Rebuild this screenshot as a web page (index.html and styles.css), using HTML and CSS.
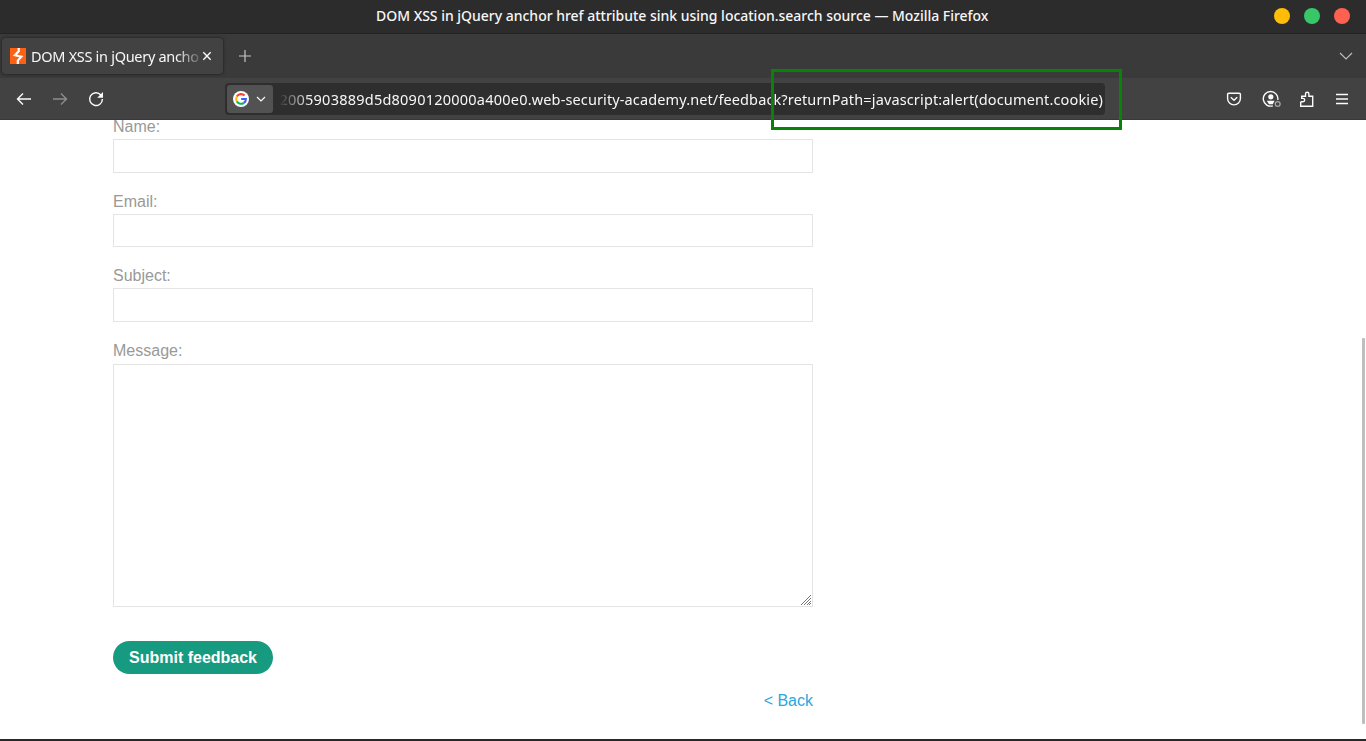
FILE: index.html
```
<!DOCTYPE html>
<html lang="en">
<head>
<meta charset="utf-8">
<title>DOM XSS in jQuery anchor href attribute sink using location.search source</title>
<link rel="stylesheet" href="styles.css">
</head>
<body>
<header class="titlebar">
  <span class="window-title">DOM XSS in jQuery anchor href attribute sink using location.search source — Mozilla Firefox</span>
  <div class="window-buttons"><i class="dot yellow"></i><i class="dot green"></i><i class="dot red"></i></div>
</header>
<div class="tabs">
  <div class="tab">
    <svg class="favicon" width="16" height="16" viewBox="0 0 16 16"><path class="favicon-bg" d="M0 0h16v16H0z"/><path class="bolt" d="M8.7 0V3.2L5 7.2L11.3 8.6L7.8 12.6V16"/></svg>
    <span class="tab-label">DOM XSS in jQuery anchor href</span>
    <svg class="tab-close" width="10" height="10" viewBox="0 0 10 10"><path d="M1.3 1.3l7.4 7.4M8.7 1.3l-7.4 7.4"/></svg>
  </div>
  <svg class="new-tab" width="14" height="14" viewBox="0 0 14 14"><path d="M7 1v12M1 7h12"/></svg>
  <svg class="all-tabs" width="14" height="8" viewBox="0 0 14 8"><path d="M1 1l6 6 6-6"/></svg>
</div>
<nav class="toolbar">
  <div class="nav-buttons">
    <svg width="16" height="16" viewBox="0 0 16 16"><path d="M15 8H1.5M7 2.5L1.5 8 7 13.5"/></svg>
    <svg class="disabled" width="16" height="16" viewBox="0 0 16 16"><path d="M1 8h13.5M9 2.5L14.5 8 9 13.5"/></svg>
    <svg width="16" height="16" viewBox="0 0 16 16"><path d="M12.9 4A6.4 6.4 0 1 0 14.4 8"/><path class="solid" d="M15 1v5.8H9.2z"/></svg>
  </div>
  <div class="urlbar">
    <div class="engine">
      <svg width="16" height="16" viewBox="0 0 16 16"><circle class="g-bg" cx="8" cy="8" r="8"/><path class="g-red" d="M3.8 5.6A4.9 4.9 0 0 1 11.6 4.6"/><path class="g-yellow" d="M3.8 5.5A4.9 4.9 0 0 0 3.8 10.5"/><path class="g-green" d="M3.8 10.4A4.9 4.9 0 0 0 11 11.8"/><path class="g-blue" d="M8.2 8H12.9A4.9 4.9 0 0 1 11 11.9"/></svg>
      <svg class="engine-arrow" width="10" height="6" viewBox="0 0 10 6"><path d="M1 1l4 4 4-4"/></svg>
    </div>
    <div class="url"><span class="url-host">2005903889d5d8090120000a400e0.</span><span class="url-path">web-security-academy.net/feedback</span><span class="url-query">?returnPath=javascript:alert(document.cookie)</span></div>
  </div>
  <div class="actions">
    <svg width="16" height="16" viewBox="0 0 16 16"><path d="M2.8 2.2h10.4a1.2 1.2 0 0 1 1.2 1.2v4.1a6.4 6.4 0 0 1-12.8 0V3.4a1.2 1.2 0 0 1 1.2-1.2z"/><path d="M4.8 6.3L8 9.3l3.2-3"/></svg>
    <svg class="account" width="19" height="18" viewBox="0 0 19 18"><path d="M10.8 15.8A7.3 7.3 0 1 1 15.8 10"/><circle class="solid" cx="8.8" cy="6.8" r="2.6"/><path class="solid" d="M4.8 10.8h7.8l-1.8 3.4H7z"/><circle class="badge" cx="15.7" cy="14" r="2.4"/></svg>
    <svg width="16" height="16" viewBox="0 0 16 16"><path d="M1.7 10.8V15.2H13.7V5.3H9.9V3a1.7 1.7 0 0 0-3.4 0V5.3H2.7V7.4H4a1.7 1.7 0 0 1 0 3.4H1.7"/></svg>
    <svg width="14" height="12" viewBox="0 0 14 12"><path d="M1 1.5h12M1 6h12M1 10.5h12"/></svg>
  </div>
</nav>
<main class="page">
  <form class="feedback">
    <label class="name-label">Name:</label>
    <div class="field name-field"></div>
    <label>Email:</label>
    <div class="field"></div>
    <label>Subject:</label>
    <div class="field subject-field"></div>
    <label>Message:</label>
    <div class="field message-field"><svg class="grip" width="10" height="10" viewBox="0 0 10 10" shape-rendering="crispEdges"><path d="M0 10L10 0M3 10l7-7M6 10l4-4M8 10l2-2"/></svg></div>
    <button type="button" class="submit">Submit feedback</button>
    <a class="back">&lt; Back</a>
  </form>
</main>
<div class="scroll-thumb"></div>
<div class="highlight"></div>
</body>
</html>
```
FILE: styles.css
```
* { box-sizing: border-box; }
body { margin: 0; width: 1366px; height: 741px; overflow: hidden; display: flex; flex-direction: column; background: #fff; font-family: "Liberation Sans", Arial, sans-serif; position: relative; }
svg { display: block; flex: none; fill: none; stroke: #fbfbfe; stroke-width: 1.4; }
.solid { fill: #fbfbfe; stroke: none; }
.titlebar, .tabs, .toolbar { font-family: "Noto Sans", "Open Sans", sans-serif; color: #f7f7f7; white-space: nowrap; flex: none; display: flex; align-items: center; }
.titlebar { height: 34px; background: #2c2c2c; border-bottom: 1px solid #291f25; padding: 0 16px 2px 376px; justify-content: space-between; }
.window-title { font-size: 14px; font-weight: 500; letter-spacing: -0.015px; }
.window-buttons { display: flex; gap: 14px; }
.dot { width: 16px; height: 16px; border-radius: 50%; }
.yellow { background: #ffbd09; }
.green { background: #38c768; }
.red { background: #ff6151; }
.tabs { height: 44px; background: #3a3a3a; padding: 0 13px 0 2px; }
.tab { width: 221px; height: 36px; border-radius: 4px; background: #424242; box-shadow: 0 0 3px #171717; display: flex; align-items: center; padding: 0 11px 0 8px; }
.favicon-bg { fill: #ff6112; stroke: none; }
.bolt { stroke: #fff; stroke-width: 2.2; }
.tab-label { width: 169px; margin-left: 5px; overflow: hidden; font-size: 14.5px; letter-spacing: -0.3px; -webkit-mask-image: linear-gradient(to right, #000 145px, transparent 174px); mask-image: linear-gradient(to right, #000 145px, transparent 174px); }
.tab-close { margin-left: 2px; }
.new-tab { margin-left: 15px; stroke: #c7c7c9; stroke-width: 1.2; }
.all-tabs { margin-left: auto; stroke: #bdbdbf; stroke-width: 1.2; }
.toolbar { height: 42px; background: #424242; border-bottom: 1px solid #383838; padding: 0 16px; }
.nav-buttons { display: flex; gap: 20px; width: 209px; }
.disabled { opacity: .4; }
.urlbar { width: 880px; height: 32px; border-radius: 4px; background: #2e2e2e; display: flex; align-items: center; padding: 0 2px; }
.engine { width: 46px; height: 28px; border-radius: 3px; background: #525252; display: flex; align-items: center; padding-left: 6px; gap: 7px; margin-left: 0; }
.engine-arrow { stroke-width: 1.2; }
.g-bg { fill: #fff; stroke: none; }
.g-red, .g-yellow, .g-green, .g-blue { stroke-width: 2.1; }
.g-red { stroke: #ff4131; }
.g-yellow { stroke: #fbbc05; }
.g-green { stroke: #12b35a; }
.g-blue { stroke: #405cf5; }
.url { width: 824px; margin-left: 6px; overflow: hidden; display: flex; justify-content: flex-end; font-size: 14.5px; -webkit-mask-image: linear-gradient(to right, transparent, #000 32px); mask-image: linear-gradient(to right, transparent, #000 32px); }
.url-host { letter-spacing: 0.23px; }
.url-path { letter-spacing: 0.12px; }
.url-query { letter-spacing: 0.14px; }
.actions { margin-left: auto; display: flex; align-items: center; gap: 20px; margin-right: 1px; }
.account { margin-right: -2px; }
.badge { stroke: #a5a5a5; stroke-width: 1.3; }
.page { height: 621px; overflow: hidden; border-bottom: 2px solid #29282b; padding-left: 113px; }
.feedback { width: 700px; display: flex; flex-direction: column; color: #999; font-size: 16px; line-height: 20px; }
label { height: 18px; margin-bottom: 4px; }
.name-label { margin-top: -3px; }
.field { height: 33px; border: 1px solid #e4e4e4; background: #fff; margin-bottom: 19px; }
.name-field { height: 34px; }
.subject-field { height: 34px; }
.message-field { height: 243px; margin: 1px 0 34px; display: flex; align-items: flex-end; justify-content: flex-end; padding: 1px; }
.grip { stroke: #777; stroke-width: 1; }
.submit { width: 160px; height: 33px; border: 0; border-radius: 17px; padding: 0; background: #179b80; color: #fff; font: bold 16px "Liberation Sans", Arial, sans-serif; }
.back { align-self: flex-end; margin-top: 17px; color: #29a7df; }
.scroll-thumb { position: absolute; left: 1362px; top: 338px; width: 3px; height: 386px; border-radius: 1px; background: #bdbebd; }
.highlight { position: absolute; left: 771px; top: 69px; width: 351px; height: 61px; border: 3px solid #078307; }
```
